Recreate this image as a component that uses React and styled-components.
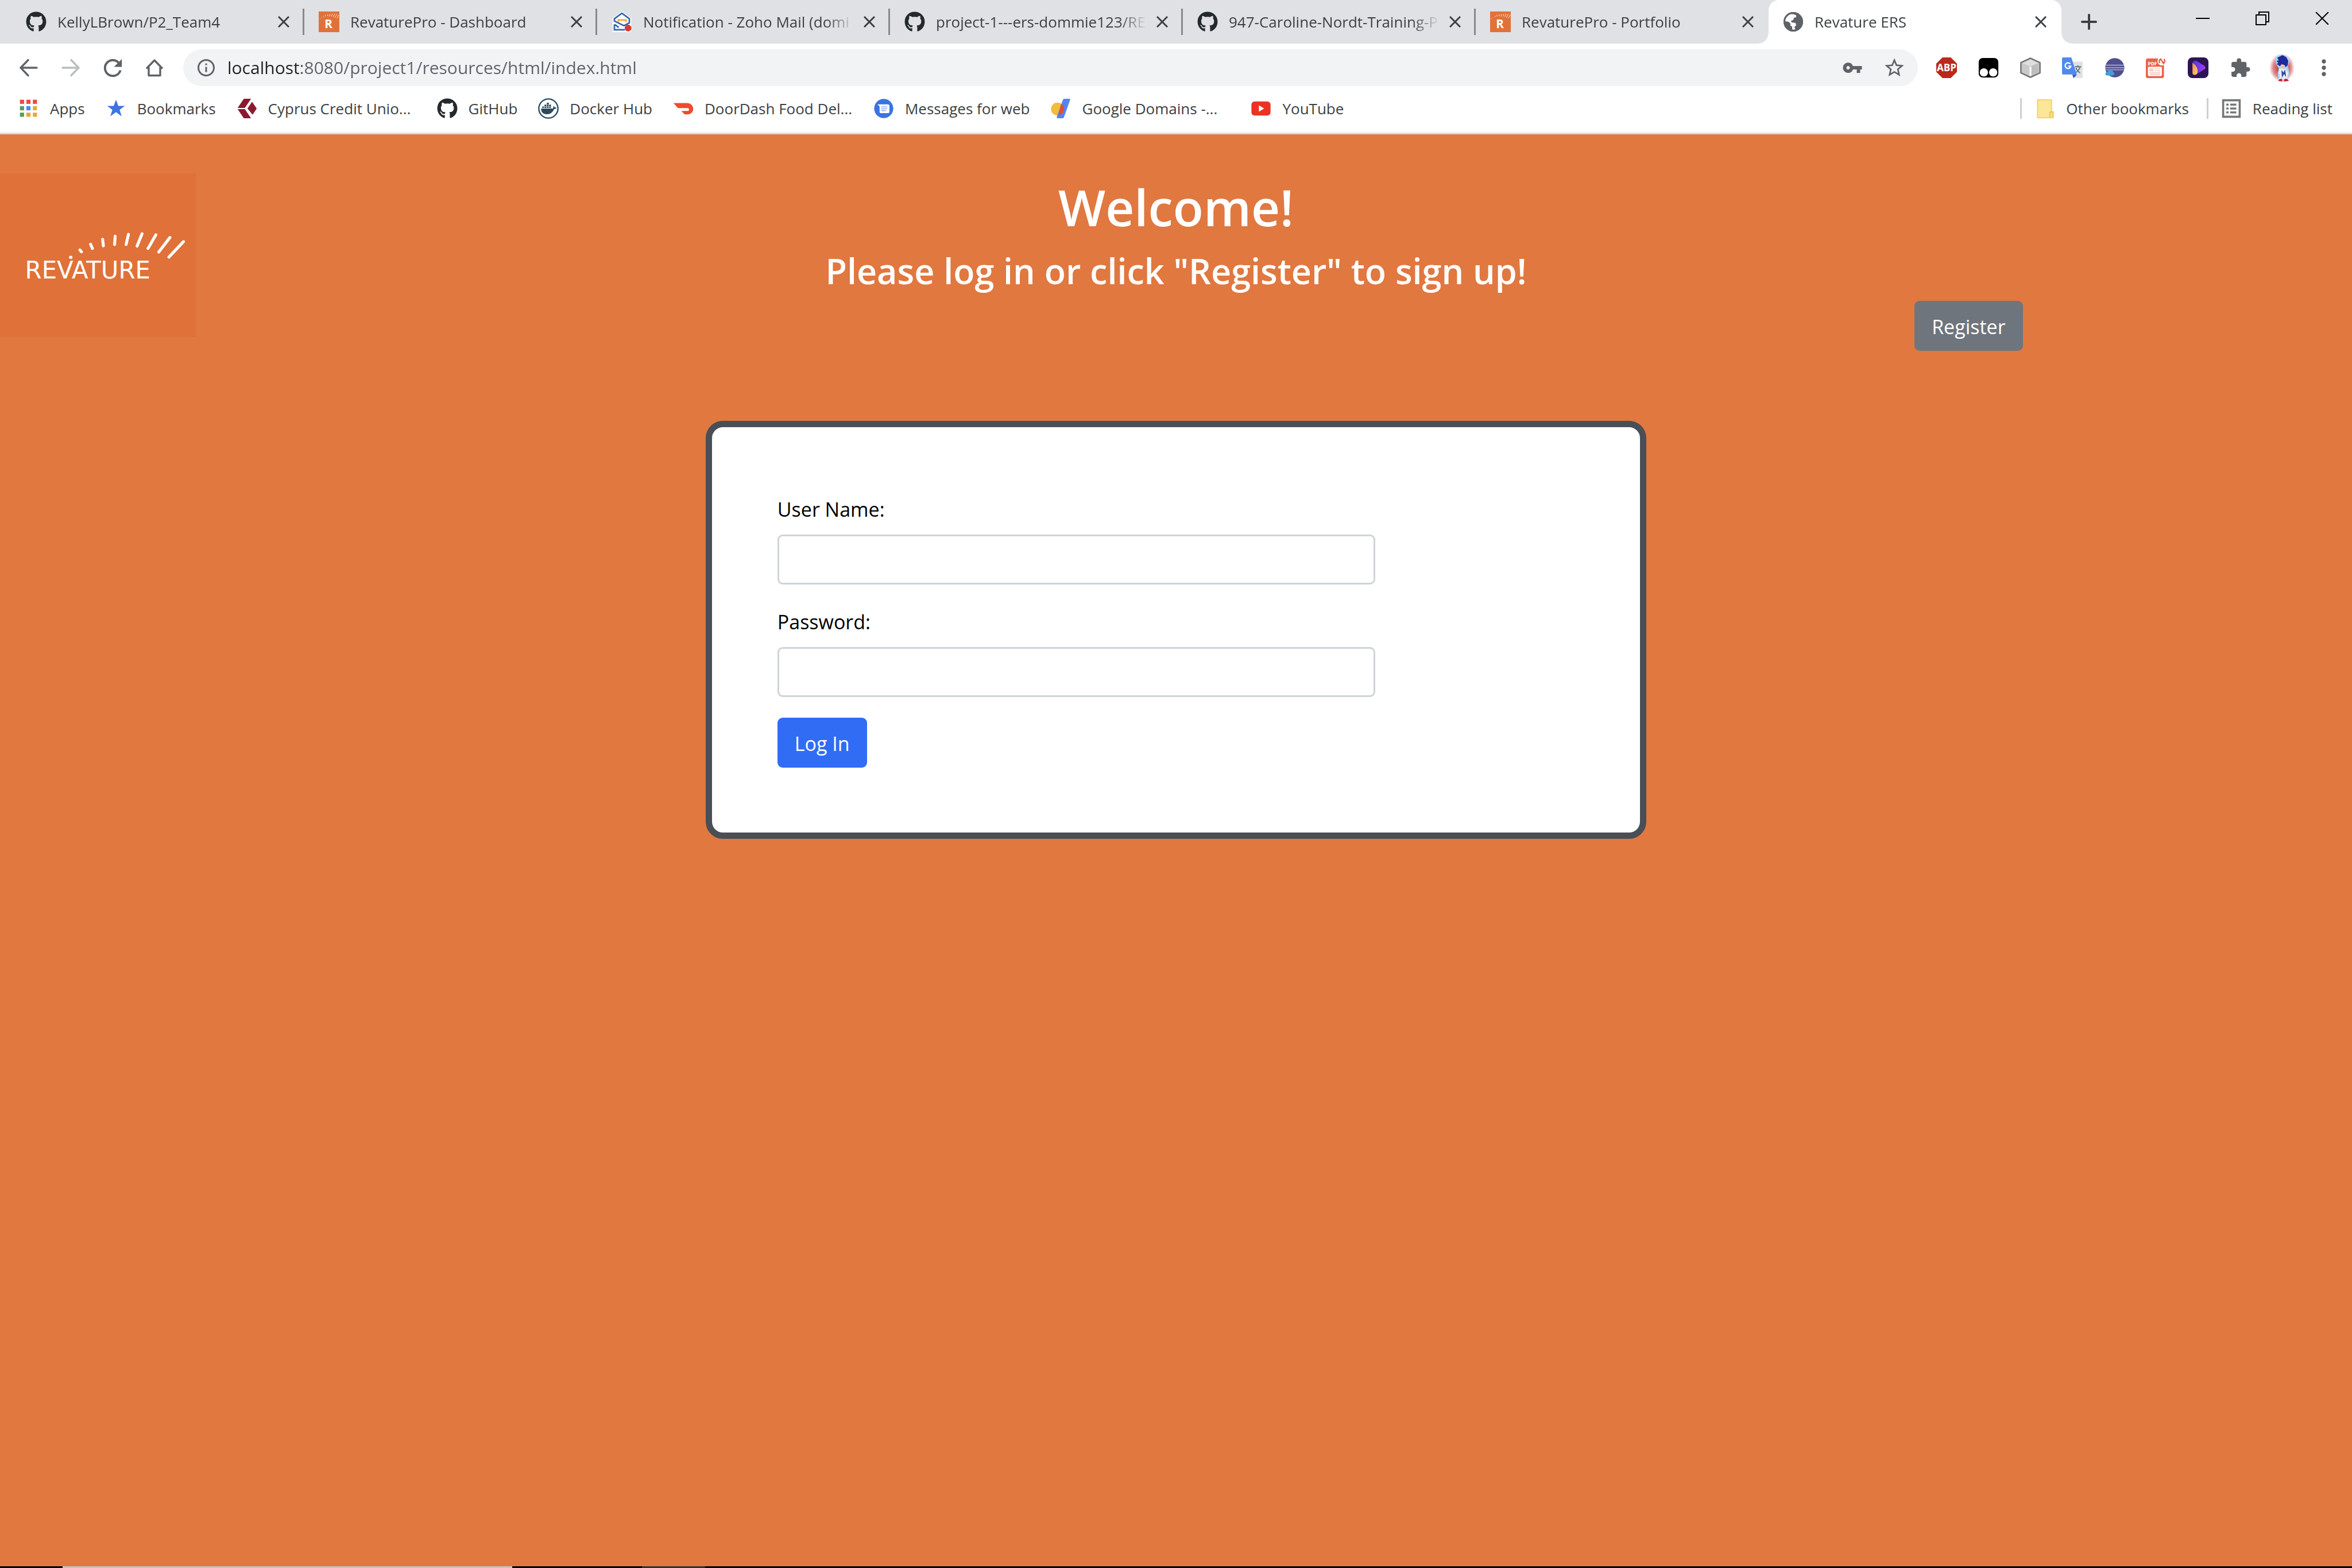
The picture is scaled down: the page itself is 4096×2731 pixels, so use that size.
import React from "react";
import styled, { createGlobalStyle, css } from "styled-components";
import { FaGithub } from "react-icons/fa";
import {
  MdRefresh,
  MdOutlineInfo,
  MdVpnKey,
  MdStarBorder,
  MdExtension,
  MdMoreVert,
} from "react-icons/md";

const GlobalStyle = createGlobalStyle`
  *, *::before, *::after { box-sizing: border-box; }
  body { margin: 0; background: #e07840; }
  body, button, input { font-family: "Open Sans", "Noto Sans", sans-serif; }
  svg { display: block; flex: none; }
`;

const Window = styled.div`
  display: flex;
  flex-direction: column;
  min-height: 100vh;
`;

/* ---------- tab strip ---------- */

const TabStrip = styled.div`
  display: flex;
  height: 76px;
  padding-left: 20px;
  background: #dfe1e5;
`;

const Tab = styled.div`
  position: relative;
  display: flex;
  align-items: center;
  flex: 0 1 510px;
  min-width: 0;
  padding-left: 25px;
  ${(p) =>
    p.$active &&
    css`
      background: #fff;
      border-radius: 18px 18px 0 0;
      &::before,
      &::after {
        content: "";
        position: absolute;
        bottom: 0;
        width: 18px;
        height: 18px;
      }
      &::before {
        right: 100%;
        background: radial-gradient(circle at 0 0, transparent 17px, #fff 18px);
      }
      &::after {
        left: 100%;
        background: radial-gradient(circle at 100% 0, transparent 17px, #fff 18px);
      }
    `}
`;

const PlainButton = styled.button`
  display: flex;
  align-items: center;
  justify-content: center;
  padding: 0;
  border: 0;
  background: none;
  color: #5f6368;
  cursor: pointer;
`;

const TabButton = styled(PlainButton)`
  flex: 1;
  min-width: 0;
  height: 100%;
  justify-content: flex-start;
  gap: 19px;
  color: #3c4043;
`;

const TabTitle = styled.span`
  flex: 1;
  overflow: hidden;
  text-align: left;
  white-space: nowrap;
  font-size: 26px;
  line-height: 40px;
  mask-image: linear-gradient(90deg, #000 calc(100% - 50px), transparent);
`;

const TabClose = styled(PlainButton)`
  width: 24px;
  height: 24px;
  margin-left: 14px;
  color: #3c4043;
`;

const TabDivider = styled.span`
  width: 3px;
  height: 46px;
  margin-left: 21px;
  background: ${(p) => (p.$visible ? "#88898d" : "transparent")};
`;

const NewTab = styled(PlainButton)`
  width: 48px;
  margin-left: 24px;
  color: #3c4043;
`;

const WindowControls = styled.div`
  display: flex;
  margin-left: auto;
`;

const WindowButton = styled(PlainButton)`
  width: 104px;
  height: 64px;
  color: #000;
`;

/* ---------- toolbar ---------- */

const Toolbar = styled.div`
  display: flex;
  align-items: center;
  gap: 27px;
  padding: 10px 26px 0 27px;
  background: #fff;
`;

const ToolButton = styled(PlainButton)`
  width: 46px;
  height: 46px;
  color: ${(p) => (p.$dim ? "#babcbe" : "#5f6368")};
`;

const Omnibox = styled.div`
  display: flex;
  align-items: center;
  flex: 1;
  height: 64px;
  padding: 0 18px 0 22px;
  border-radius: 32px;
  background: #f1f3f4;
  color: #5f6368;
`;

const Address = styled.input`
  flex: 1;
  min-width: 0;
  margin-left: 19px;
  padding: 0;
  border: 0;
  outline: 0;
  font-size: 30px;
  line-height: 44px;
  color: transparent;
  caret-color: #202124;
  background: linear-gradient(90deg, #202124 129px, #5f6368 129px);
  background-clip: text;
  -webkit-background-clip: text;
`;

const OmniActions = styled.div`
  display: flex;
  gap: 27px;
`;

/* ---------- bookmarks ---------- */

const BookmarkBar = styled.nav`
  display: flex;
  align-items: center;
  height: 84px;
  padding: 0 34px 3px 32px;
  border-bottom: 3px solid #dadce0;
  background: #fff;
`;

const BookmarkList = styled.div`
  display: flex;
  gap: 36px;
`;

const Bookmark = styled.a`
  display: flex;
  align-items: center;
  gap: 19px;
  color: #3c4043;
  text-decoration: none;
  font-size: 26px;
  line-height: 40px;
  white-space: nowrap;
`;

const BookmarkTitle = styled.span`
  width: ${(p) => (p.$wide ? "258px" : "auto")};
`;

const BookmarkAside = styled.div`
  display: flex;
  align-items: center;
  margin-left: auto;
`;

const BookmarkDivider = styled.span`
  width: 3px;
  height: 36px;
  margin: 0 22px 0 31px;
  background: #cdcfd2;
`;

/* ---------- page ---------- */

const Page = styled.main`
  flex: 1;
  padding-top: 68px;
  background: #e07840;
`;

const Masthead = styled.header`
  display: grid;
  grid-template-columns: 341px 1fr 341px;
  grid-template-rows: auto auto;
`;

const LogoCell = styled.div`
  grid-row: 1 / 3;
`;

const Headings = styled.div`
  text-align: center;
  color: #fff;
`;

const Title = styled.h1`
  margin: 0 0 12px;
  font-size: 87px;
  line-height: 117px;
  font-weight: 600;
`;

const Subtitle = styled.h3`
  margin: 0 0 11px;
  font-size: 61px;
  line-height: 82px;
  font-weight: 600;
`;

const RegisterRow = styled.div`
  grid-column: 2 / 4;
  grid-row: 2;
  display: flex;
  justify-content: flex-end;
  padding-right: 14vw;
`;

const PageButton = styled.button`
  height: 87px;
  padding: 3px 30px 0;
  border: 0;
  border-radius: 9px;
  background: ${(p) => (p.$primary ? "#316cf4" : "#6e757c")};
  color: #fff;
  font-size: 34px;
  line-height: 54px;
  cursor: pointer;
`;

const LoginCard = styled.form`
  width: 40%;
  margin: 122px auto 0;
  padding: 114px 114px 113px;
  border: 11px solid #4a4e56;
  border-radius: 30px;
  background: #fff;
`;

const Field = styled.div`
  margin-bottom: 36px;
`;

const FieldLabel = styled.label`
  display: block;
  margin-bottom: 16px;
  padding-top: 2px;
  color: #000;
  font-size: 34px;
  line-height: 55px;
`;

const FieldInput = styled.input`
  display: block;
  width: 75%;
  height: 87px;
  padding: 0 27px;
  border: 3px solid #ced4da;
  border-radius: 9px;
  background: #fff;
  font-size: 34px;
`;

/* ---------- taskbar sliver ---------- */

const Taskbar = styled.footer`
  display: flex;
  height: 3px;
  padding-left: 109px;
  background: #000;
`;

const TaskbarSearch = styled.span`
  width: 783px;
  background: #c4c4c4;
`;

const TaskbarItem = styled.span`
  width: 110px;
  margin-left: 226px;
  background: #333;
`;

/* ---------- icons ---------- */

const Cross = ({ size = 20, width = 3 }) => (
  <svg width={size} height={size} viewBox="0 0 20 20" stroke="currentColor" strokeWidth={width} fill="none">
    <path d="M1 1L19 19M19 1L1 19" />
  </svg>
);

const RevaturePro = () => (
  <svg width="36" height="36" viewBox="0 0 40 40">
    <path d="M0 0h40v40H0z" fill="#e07239" />
    <path
      d="M2 14h1M5 11l1 1M9 8.500l1 2M13 6.500l.5 3M17.500 5.500v3.500M22 5l-.8 4.500M26.500 4.500L25 9.500M31 4.500l-3 6M35 5l-3.500 7M39 6.500L35.500 13"
      stroke="#fbe3d6"
      strokeWidth="1.100"
    />
    <text x="19" y="32" textAnchor="middle" fontFamily="Open Sans, sans-serif" fontWeight="700" fontSize="23" fill="#fff">
      R
    </text>
  </svg>
);

const ZohoMail = () => (
  <svg width="36" height="36" viewBox="0 0 40 40">
    <path d="M20 0L38 13v25q0 2-2 2H4q-2 0-2-2V13z" fill="#fff" />
    <path d="M20 3.500L34.500 14v8L24 27.500 5.500 18.500V14z" fill="none" stroke="#3567ae" strokeWidth="3" strokeLinejoin="round" />
    <path d="M5.500 25v10.500H26M6 25l8 6" fill="none" stroke="#3567ae" strokeWidth="3" />
    <path d="M13 20.500v-4h15v4" fill="none" stroke="#f0b73a" strokeWidth="3.500" />
    <circle cx="32" cy="32" r="6.500" fill="#d93a30" />
  </svg>
);

const Globe = () => (
  <svg width="36" height="36" viewBox="0 0 36 36">
    <circle cx="18" cy="18" r="17" fill="#5f6368" />
    <path
      d="M14 4.500C8 6 4 11 3.800 17L10 18l3 3v4l3 1v5c2 .8 4 .6 5.500.2L20 27l3-3-1-4-7-1-1-3 4-1 1-4 4-1V6.500C20 5 17 4.200 14 4.500z"
      fill="#fff"
    />
    <path d="M25 8l-3 5 2 3 6 1 1 5c2-6 0-11-6-14z" fill="#5f6368" />
    <circle cx="18" cy="18" r="15.500" fill="none" stroke="#5f6368" strokeWidth="3" />
  </svg>
);

const Arrow = ({ flip }) => (
  <svg width="32" height="32" viewBox="0 0 32 32" fill="none" stroke="currentColor" strokeWidth="3.400" strokeLinecap="round">
    <path d={flip ? "M2 16h27M17 2.500L30 16 17 29.500" : "M30 16H3M15 2.500L2 16l13 13.500"} />
  </svg>
);

const Home = () => (
  <svg width="32" height="32" viewBox="0 0 32 32" fill="none" stroke="currentColor" strokeWidth="3.400">
    <path d="M2 17.500L16 3l14 14.500M6 15v14.500h20V15" strokeLinejoin="round" />
  </svg>
);

const AppsGrid = () => {
  const colors = ["#e94b3c", "#e94b3c", "#e94b3c", "#549e5c", "#4a8af4", "#e9a83a", "#549e5c", "#e9a83a", "#e9a83a"];
  return (
    <svg width="36" height="36" viewBox="0 0 40 40">
      {colors.map((c, i) => (
        <rect key={i} x={3 + (i % 3) * 12.500} y={3 + Math.floor(i / 3) * 12.500} width="8" height="8" fill={c} />
      ))}
    </svg>
  );
};

const BlueStar = () => (
  <svg width="36" height="36" viewBox="0 0 40 40">
    <path d="M20 3l4.500 12H37l-10 7.500L31 35l-11-8L9 35l4-12.500L3 15h12.500z" fill="#3b74e4" />
  </svg>
);

const CreditUnion = () => (
  <svg width="36" height="36" viewBox="0 0 40 40" fill="#8b1a2f">
    <path d="M14 1h14L16 19H2zM2 21h14l12 18H14zM30 7l9 13-8 12-10-12z" />
  </svg>
);

const Docker = () => (
  <svg width="36" height="36" viewBox="0 0 40 40">
    <circle cx="20" cy="20" r="18.500" fill="#fff" stroke="#2a4a61" strokeWidth="2.600" />
    <path d="M6 20h23c1-3 0-4 1-5 2 1 2 3 2 3 2-.6 3 0 3.500.5-1 2.500-3 2.500-4.500 2.500C28 28 24 31 17 31 10 31 5.500 27 6 20z" fill="#2a4a61" />
    <path d="M8 16h3.500v3H8zM12.500 16H16v3h-3.500zM17 16h3.500v3H17zM21.500 16H25v3h-3.500zM12.500 12.500H16v3h-3.500zM17 12.500h3.500v3H17zM21.500 12.500H25v3h-3.500zM17 9h4v3h-4z" fill="#2a4a61" />
  </svg>
);

const DoorDash = () => (
  <svg width="36" height="36" viewBox="0 0 42 42">
    <path d="M1 10h27c8 0 13 5 13 12s-5 11-12 11h-4q-1 0-2-1l-6-6h12c5 0 5-6 0-6H11q-1 0-2-1z" fill="#ee4a2b" />
  </svg>
);

const Messages = () => (
  <svg width="36" height="36" viewBox="0 0 40 40">
    <circle cx="20" cy="20" r="18.500" fill="#3a73e3" />
    <path d="M8 12h20q3 0 3 3v11q0 3-3 3H15q-3 0-3-3V16z" fill="#fff" />
    <path d="M15 17h12M15 20.500h12M15 24h9" stroke="#8fb0ef" strokeWidth="1.800" />
  </svg>
);

const GoogleDomains = () => (
  <svg width="36" height="36" viewBox="0 0 40 40">
    <circle cx="14" cy="21" r="12.500" fill="#f2bb3c" />
    <path d="M27 1h10q2 0 1.500 2L26.500 37q-.6 2-2.500 2H14q-2 0-1.500-2L24.500 3q.8-2 2.500-2z" fill="#5385ef" />
    <path d="M21 10.600q6 4 5.500 11-1 9-10.500 11.700z" fill="#dc4f3a" />
  </svg>
);

const YouTube = () => (
  <svg width="36" height="36" viewBox="0 0 40 40">
    <rect x="1.500" y="6.500" width="37" height="27" rx="6" fill="#ea3323" />
    <path d="M16 14l10 6-10 6z" fill="#fff" />
  </svg>
);

const Folder = () => (
  <svg width="36" height="36" viewBox="0 0 40 40">
    <path d="M6 3h27v23h3v12H6z" fill="#fbe69a" stroke="#f0cf55" strokeWidth="1.800" />
    <path d="M30 37V27h6v11" fill="#fbe08a" stroke="#e8c143" strokeWidth="1.800" />
  </svg>
);

const ReadingList = () => (
  <svg width="36" height="36" viewBox="0 0 40 40">
    <path d="M4 4h32v32H4z" fill="none" stroke="#767778" strokeWidth="4" />
    <path d="M10 12.500h4.500M17.500 12.500h12M10 20h4.500M17.500 20h12M10 27.500h4.500M17.500 27.500h12" stroke="#767778" strokeWidth="3.800" />
  </svg>
);

const Abp = () => (
  <svg width="36" height="36" viewBox="0 0 40 40">
    <path d="M12 0h16l12 12v16L28 40H12L0 28V12z" fill="#ba281b" />
    <text x="20" y="27" textAnchor="middle" fontFamily="Open Sans, sans-serif" fontWeight="700" fontSize="19" fill="#fff">
      ABP
    </text>
  </svg>
);

const Tamper = () => (
  <svg width="36" height="36" viewBox="0 0 40 40">
    <rect x="1" y="1" width="38" height="38" rx="8" fill="#000" />
    <circle cx="11" cy="29" r="8" fill="#fff" />
    <circle cx="29" cy="29" r="8" fill="#fff" />
  </svg>
);

const Cube = () => (
  <svg width="36" height="36" viewBox="0 0 40 40" strokeLinejoin="round">
    <path d="M20 1.500L38.500 10v20L20 38.500 1.500 30V10z" fill="#c9c9c9" stroke="#6d6d6d" strokeWidth="2.600" />
    <path d="M20 4l15 7-15 6.500L5 11z" fill="#dedede" />
    <path d="M20 17.500L35 11v18l-15 7z" fill="#bdbdbd" />
    <path d="M20 18v18" stroke="#f4f4f4" strokeWidth="4" />
  </svg>
);

const Translate = () => (
  <svg width="36" height="36" viewBox="0 0 40 40">
    <path d="M18 8h20q2 0 2 2v28q0 2-2 2H22z" fill="#dfe1e2" />
    <path d="M25 18h12M30.500 15v3M35 18q-2 7-9 12M27 20q2 6 8 10" fill="none" stroke="#5a7d86" strokeWidth="2.200" />
    <path d="M20 33h9l-7 7z" fill="#3a50b8" />
    <path d="M2 0h16l10.500 33H2q-2 0-2-2V2q0-2 2-2z" fill="#5188ee" />
    <path d="M16 12.500a5.500 5.500 0 1 0 1 4.500h-5" fill="none" stroke="#fff" strokeWidth="2.600" />
  </svg>
);

const Eclipse = () => (
  <svg width="36" height="36" viewBox="0 0 40 40">
    <circle cx="21" cy="20" r="18.500" fill="#4f4f8d" />
    <path d="M3 15h36M2.500 20h37M3 24h36" stroke="#b9b9d6" strokeWidth="1.500" />
    <path d="M6 35q-4-1-3-5 1-2 4-2 2-4 7-3 4 1 4 4 3 1 2 4-1 2-4 2z" fill="#3d9fdc" />
  </svg>
);

const Pdf = () => (
  <svg width="36" height="36" viewBox="0 0 40 40">
    <rect x="0" y="2" width="35" height="38" rx="4" fill="#e8634a" />
    <rect x="4" y="18" width="27" height="18" rx="2" fill="#fff" />
    <path d="M7 21h8v6H7z" fill="#f6cfc6" />
    <path d="M17 22h11M17 26h11M7 30h21M7 33h21" stroke="#f3bdb1" strokeWidth="1.400" />
    <text x="4" y="15" fontFamily="Open Sans, sans-serif" fontWeight="700" fontSize="9" fill="#fff">
      PDF
    </text>
    <circle cx="31" cy="7" r="8.500" fill="#fff" />
    <path d="M27 11q-3-5 2-8l1 3M35 3q4 5-1 9l-2-4M28 3l7 8" fill="none" stroke="#e8634a" strokeWidth="2.600" />
  </svg>
);

const VideoPlayer = () => (
  <svg width="36" height="36" viewBox="0 0 40 40">
    <defs>
      <linearGradient id="play" x1="0" x2="1">
        <stop offset="0" stopColor="#4a35e8" />
        <stop offset="1" stopColor="#a63df0" />
      </linearGradient>
      <linearGradient id="flame" x1="0" x2="1" y2="1">
        <stop offset="0" stopColor="#f08a4a" />
        <stop offset="1" stopColor="#fbd06a" />
      </linearGradient>
    </defs>
    <rect width="40" height="40" rx="9" fill="#2d1554" />
    <path d="M10 9q2-4 7-2l15 9q4 4 0 7L16 33z" fill="url(#play)" />
    <path d="M9 10q11 8 10 18-1 6-6 6-4 0-4-5z" fill="url(#flame)" />
  </svg>
);

const Avatar = () => (
  <svg width="46" height="50" viewBox="0 0 50 54">
    <defs>
      <radialGradient id="aura">
        <stop offset="0.300" stopColor="#c9444a" />
        <stop offset="0.700" stopColor="#dd8a8c" />
        <stop offset="1" stopColor="#fff" />
      </radialGradient>
    </defs>
    <ellipse cx="25" cy="27" rx="24" ry="27" fill="url(#aura)" />
    <path d="M15 5q10-6 20 1l5 8-4 10 3 12-3 14H18l-1-12 2-10-5-8-1-8z" fill="#a9d4f5" />
    <path d="M16 8l4-2 6-3 7 4 4 7-1 8-4 4-2-4-6-1-3 3-6-4 3-2-3-4 4-1z" fill="#1d2a9c" />
    <path d="M24 20l6 2-1 5-3 2-3-4z" fill="#e9c39a" />
    <path d="M20 29l5-1 3 2 4-2 5 10-3 11H20l1-8-2-3z" fill="#e8eef9" />
    <path d="M24 31l4 5 3-6 2 15-4-6-4 7z" fill="#2f49ac" />
    <path d="M18 52q2-5 7-4l1 5zM28 53l2-5q6-1 8 4z" fill="#c81f32" />
  </svg>
);

const RevatureLogo = () => (
  <svg width="341" height="285" viewBox="0 0 375 313" role="img" aria-label="Revature">
    <path d="M0 0h375v313H0z" fill="#e07138" />
    <g stroke="#fff" strokeWidth="5.600" strokeLinecap="round">
      <path d="M135 160.500h1M153 146.500l3 3.500M173.500 135.500l3.500 8M196.500 126l1.500 12.500M220.500 120l-1 16M246 116.500L241.500 136M272 115.500L262.500 139M298.500 117.500L283.500 143.500M325.500 122.500L304 150.500M351.500 130.500L323.500 160" />
    </g>
    <text x="168" y="201" textAnchor="middle" fontFamily="DejaVu Sans, sans-serif" fontSize="46" fill="#fff">
      REVATURE
    </text>
  </svg>
);

/* ---------- data ---------- */

const GitHubMark = () => <FaGithub size={36} color="#24292e" />;

const tabs = [
  { title: "KellyLBrown/P2_Team4", icon: GitHubMark },
  { title: "RevaturePro - Dashboard", icon: RevaturePro },
  { title: "Notification - Zoho Mail (domi", icon: ZohoMail },
  { title: "project-1---ers-dommie123/RE", icon: GitHubMark },
  { title: "947-Caroline-Nordt-Training-P", icon: GitHubMark },
  { title: "RevaturePro - Portfolio", icon: RevaturePro },
  { title: "Revature ERS", icon: Globe, active: true },
];

const bookmarks = [
  { title: "Apps", icon: AppsGrid },
  { title: "Bookmarks", icon: BlueStar },
  { title: "Cyprus Credit Unio...", icon: CreditUnion, wide: true },
  { title: "GitHub", icon: GitHubMark },
  { title: "Docker Hub", icon: Docker },
  { title: "DoorDash Food Del...", icon: DoorDash, wide: true },
  { title: "Messages for web", icon: Messages },
  { title: "Google Domains -...", icon: GoogleDomains, wide: true },
  { title: "YouTube", icon: YouTube },
];

const extensions = [
  { name: "Adblock Plus", icon: Abp },
  { name: "Tampermonkey", icon: Tamper },
  { name: "Cube", icon: Cube },
  { name: "Translate", icon: Translate },
  { name: "Eclipse", icon: Eclipse },
  { name: "PDF converter", icon: Pdf },
  { name: "Video player", icon: VideoPlayer },
];

const BrowserTabs = () => (
  <TabStrip>
    {tabs.map(({ title, icon: Icon, active }, i) => (
      <Tab key={title} $active={active}>
        <TabButton type="button">
          <Icon />
          <TabTitle>{title}</TabTitle>
        </TabButton>
        <TabClose type="button" aria-label={`Close ${title}`}>
          <Cross />
        </TabClose>
        <TabDivider $visible={i < tabs.length - 2} />
      </Tab>
    ))}
    <NewTab type="button" aria-label="New tab">
      <svg width="28" height="28" viewBox="0 0 28 28" stroke="currentColor" strokeWidth="4" strokeLinecap="round">
        <path d="M14 2v24M2 14h24" />
      </svg>
    </NewTab>
    <WindowControls>
      <WindowButton type="button" aria-label="Minimise">
        <svg width="24" height="24" viewBox="0 0 24 24" stroke="currentColor" strokeWidth="2">
          <path d="M0 12h24" />
        </svg>
      </WindowButton>
      <WindowButton type="button" aria-label="Restore">
        <svg width="24" height="24" viewBox="0 0 24 24" stroke="currentColor" strokeWidth="2" fill="none">
          <path d="M1 6h17v17H1zM6 6V1h17v17h-5" />
        </svg>
      </WindowButton>
      <WindowButton type="button" aria-label="Close window">
        <Cross size={24} width={1.7} />
      </WindowButton>
    </WindowControls>
  </TabStrip>
);

const BrowserToolbar = () => (
  <Toolbar>
    <ToolButton type="button" aria-label="Back">
      <Arrow />
    </ToolButton>
    <ToolButton type="button" aria-label="Forward" $dim>
      <Arrow flip />
    </ToolButton>
    <ToolButton type="button" aria-label="Reload">
      <MdRefresh size={47} />
    </ToolButton>
    <ToolButton type="button" aria-label="Home">
      <Home />
    </ToolButton>
    <Omnibox>
      <MdOutlineInfo size={36} />
      <Address aria-label="Address" defaultValue="localhost:8080/project1/resources/html/index.html" />
      <OmniActions>
        <ToolButton type="button" aria-label="Saved passwords">
          <MdVpnKey size={36} />
        </ToolButton>
        <ToolButton type="button" aria-label="Bookmark this page">
          <MdStarBorder size={40} />
        </ToolButton>
      </OmniActions>
    </Omnibox>
    {extensions.map(({ name, icon: Icon }) => (
      <ToolButton key={name} type="button" aria-label={name}>
        <Icon />
      </ToolButton>
    ))}
    <ToolButton type="button" aria-label="Extensions">
      <MdExtension size={37} />
    </ToolButton>
    <ToolButton type="button" aria-label="Profile">
      <Avatar />
    </ToolButton>
    <ToolButton type="button" aria-label="Menu">
      <MdMoreVert size={44} />
    </ToolButton>
  </Toolbar>
);

const Bookmarks = () => (
  <BookmarkBar>
    <BookmarkList>
      {bookmarks.map(({ title, icon: Icon, wide }) => (
        <Bookmark key={title} href="#">
          <Icon />
          <BookmarkTitle $wide={wide}>{title}</BookmarkTitle>
        </Bookmark>
      ))}
    </BookmarkList>
    <BookmarkAside>
      <BookmarkDivider />
      <Bookmark href="#">
        <Folder />
        Other bookmarks
      </Bookmark>
      <BookmarkDivider />
      <Bookmark href="#">
        <ReadingList />
        Reading list
      </Bookmark>
    </BookmarkAside>
  </BookmarkBar>
);

export default function App() {
  return (
    <Window>
      <GlobalStyle />
      <BrowserTabs />
      <BrowserToolbar />
      <Bookmarks />
      <Page>
        <Masthead>
          <LogoCell>
            <RevatureLogo />
          </LogoCell>
          <Headings>
            <Title>Welcome!</Title>
            <Subtitle>Please log in or click "Register" to sign up!</Subtitle>
          </Headings>
          <RegisterRow>
            <PageButton type="button">Register</PageButton>
          </RegisterRow>
        </Masthead>
        <LoginCard onSubmit={(e) => e.preventDefault()}>
          <Field>
            <FieldLabel htmlFor="username">User Name:</FieldLabel>
            <FieldInput id="username" type="text" />
          </Field>
          <Field>
            <FieldLabel htmlFor="password">Password:</FieldLabel>
            <FieldInput id="password" type="password" />
          </Field>
          <PageButton type="submit" $primary>
            Log In
          </PageButton>
        </LoginCard>
      </Page>
      <Taskbar>
        <TaskbarSearch />
        <TaskbarItem />
      </Taskbar>
    </Window>
  );
}
